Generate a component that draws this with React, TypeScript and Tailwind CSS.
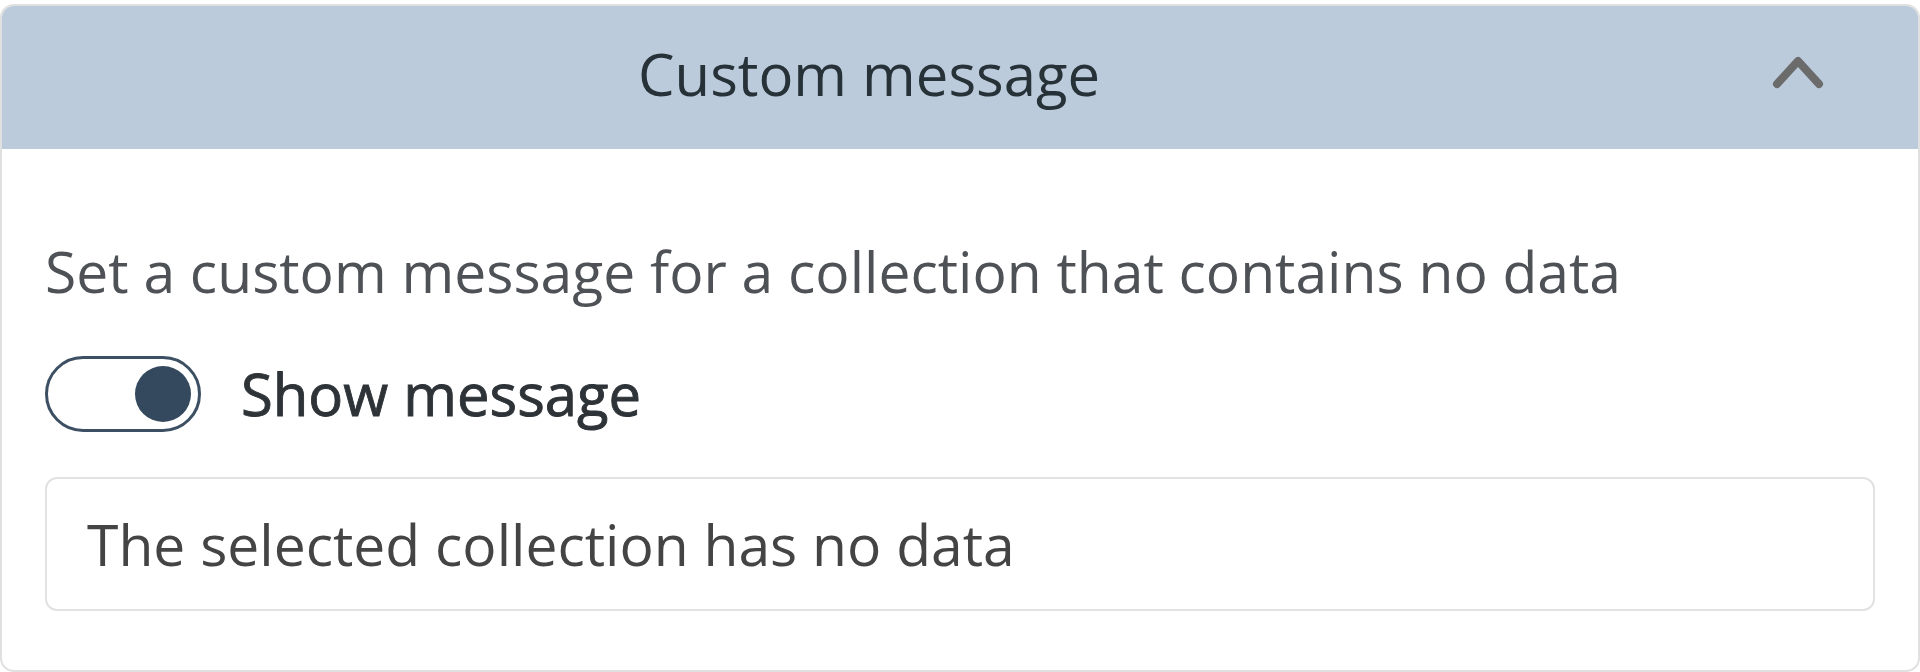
import React from 'react';

// Collapsible settings panel: custom empty-state message
const App = () => {
  return (
    <div className="min-h-screen bg-white pt-[4px] font-['Open_Sans',sans-serif]">
      <div className="w-[1920px] h-[668px] rounded-[14px] border-2 border-[#e0e0e0] overflow-hidden flex flex-col">
        {/* Header */}
        <div className="h-[143px] shrink-0 flex items-center bg-[#bccbdb]">
          <div className="flex-1 text-center text-[58px] leading-none text-[#263238] pb-[8px]">Custom message</div>
          <div className="w-[182px] flex pl-[36px] pb-[12px]">
            <svg width="52" height="36" viewBox="0 0 52 36" fill="none">
              <path
                d="M5 30 L26 7 L47 30"
                stroke="#6b6b6b"
                strokeWidth={8}
                strokeLinecap="round"
                strokeLinejoin="round"
              />
            </svg>
          </div>
        </div>

        {/* Body */}
        <div className="flex flex-col px-[43px] pt-[83px]">
          <p className="text-[57px] leading-[78px] text-[#4e5257]">
            Set a custom message for a collection that contains no data
          </p>

          <div className="flex items-center gap-[40px] mt-[46px]">
            <div className="w-[156px] h-[76px] rounded-full border-[3px] border-[#3d5063] bg-white flex items-center justify-end pr-[7px]">
              <div className="w-[56px] h-[56px] rounded-full bg-[#34495e]" />
            </div>
            <span className="text-[58px] leading-none text-[#2e3338] [-webkit-text-stroke:0.9px_#2e3338]">
              Show message
            </span>
          </div>

          <div className="mt-[45px] h-[134px] rounded-[12px] border-2 border-[#e2e2e2] flex items-center pl-[40px] pr-[40px]">
            <span className="text-[57px] leading-none text-[#444444]">The selected collection has no data</span>
          </div>
        </div>
      </div>
    </div>
  );
};

export default App;
